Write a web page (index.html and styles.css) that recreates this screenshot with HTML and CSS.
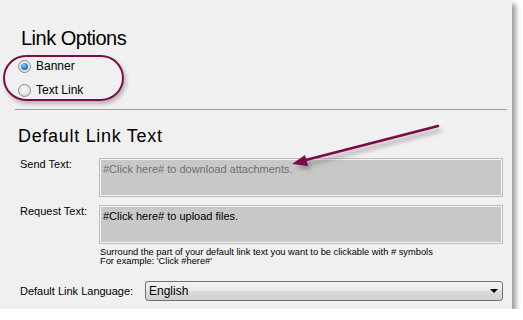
FILE: index.html
```html
<!DOCTYPE html>
<html>
<head>
<meta charset="utf-8">
<link rel="stylesheet" href="styles.css">
</head>
<body>
<div class="panel">
  <h2 class="title1">Link Options</h2>
  <div class="radios">
    <div class="radio-row"><span class="radio checked"></span><span>Banner</span></div>
    <div class="radio-row"><span class="radio"></span><span>Text Link</span></div>
  </div>
  <div class="sep"></div>
  <h2 class="title2">Default Link Text</h2>
  <div class="form">
    <div class="label">Send Text:</div>
    <div class="box disabled">#Click here# to download attachments.</div>
    <div class="label">Request Text:</div>
    <div class="box">#Click here# to upload files.</div>
    <div></div>
    <div class="hint">Surround the part of your default link text you want to be clickable with # symbols<br>For example: 'Click #here#'</div>
  </div>
  <div class="lang-row">
    <div class="lang-label">Default Link Language:</div>
    <div class="select"><span>English</span><span class="caret"></span></div>
  </div>
  <svg class="arrow" width="523" height="320" viewBox="0 0 523 320">
    <defs>
      <filter id="sh" x="-20%" y="-50%" width="140%" height="200%">
        <feGaussianBlur stdDeviation="2"/>
      </filter>
    </defs>
    <g opacity="0.45" filter="url(#sh)" transform="translate(3,4)">
      <line x1="438" y1="126" x2="302" y2="161" stroke="#555" stroke-width="3"/>
      <polygon points="292,164 305,155 308,166" fill="#555"/>
    </g>
    <line x1="438" y1="126" x2="302" y2="161" stroke="#7b0a47" stroke-width="2.5" stroke-linecap="round"/>
    <polygon points="292,164 305,155 308,166" fill="#7b0a47"/>
  </svg>
</div>
</body>
</html>
```
FILE: styles.css
```css
html, body {
  margin: 0;
  padding: 0;
  background: #ffffff;
}
body {
  font-family: "Liberation Sans", Arial, sans-serif;
  color: #000;
}
.panel {
  position: relative;
  width: 512px;
  height: 309px;
  box-sizing: border-box;
  background: #f0f0f0;
  padding-top: 28px;
  box-shadow: 4px 4px 5px rgba(0, 0, 0, 0.38);
  display: flex;
  flex-direction: column;
}
.title1 {
  margin: 0 0 0 21px;
  font-size: 20px;
  line-height: 20px;
  letter-spacing: -0.5px;
  font-weight: normal;
}
.radios {
  margin: 7px 0 0 3px;
  width: 121px;
  height: 46px;
  box-sizing: border-box;
  border: 2px solid #7b0e45;
  border-radius: 23px;
  padding: 1px 0 0 13px;
  display: flex;
  flex-direction: column;
  gap: 8px;
  box-shadow: 2px 3px 4px rgba(0, 0, 0, 0.25);
}
.radio-row {
  height: 16px;
  display: flex;
  align-items: center;
  gap: 5px;
  font-size: 12px;
}
.radio {
  width: 13px;
  height: 13px;
  box-sizing: border-box;
  border-radius: 50%;
  border: 1px solid #8b8b8b;
  background: radial-gradient(circle at 50% 40%, #fcfcfc 0%, #e6e6e6 55%, #c9c9c9 100%);
  display: flex;
  align-items: center;
  justify-content: center;
}
.radio.checked::after {
  content: "";
  width: 7px;
  height: 7px;
  border-radius: 50%;
  background: radial-gradient(circle at 40% 35%, #8fd0f7 0%, #2d7cc4 55%, #134f8b 100%);
}
.sep {
  margin: 8px 0 0 15px;
  width: 492px;
  height: 0;
  border-top: 1px solid #a0a0a0;
}
.title2 {
  margin: 17px 0 0 18px;
  font-size: 18px;
  line-height: 18px;
  letter-spacing: 0.7px;
  font-weight: normal;
}
.form {
  margin: 13px 0 0 20px;
  display: grid;
  grid-template-columns: 79px 404px;
  row-gap: 8px;
  font-size: 11px;
}
.label {
  line-height: 13px;
  padding-top: 0;
}
.box {
  height: 39px;
  box-sizing: border-box;
  background: #c8c8c8;
  border: 1px solid #bdbdbd;
  box-shadow: inset 1px 1px 0 #f4f4f4, inset -1px -1px 0 #f4f4f4;
  padding: 4px 3px;
  line-height: 13px;
  color: #000;
}
.box.disabled {
  color: #707070;
}
.hint {
  margin-top: -4px;
  font-size: 9.3px;
  line-height: 9px;
  color: #000;
  padding-left: 1px;
}
.lang-row {
  margin: 15px 0 0 20px;
  display: flex;
  align-items: center;
  font-size: 11px;
}
.lang-label {
  width: 125px;
}
.select {
  width: 358px;
  height: 20px;
  box-sizing: border-box;
  border: 1px solid #707070;
  border-radius: 3px;
  background: linear-gradient(#f2f2f2 0%, #ebebeb 45%, #dddddd 50%, #cfcfcf 100%);
  display: flex;
  align-items: center;
  justify-content: space-between;
  padding: 0 4px 0 3px;
  font-size: 12px;
}
.caret {
  width: 0;
  height: 0;
  border-left: 4px solid transparent;
  border-right: 4px solid transparent;
  border-top: 4px solid #000;
}
.arrow {
  position: absolute;
  left: 0;
  top: 0;
  pointer-events: none;
}
```
